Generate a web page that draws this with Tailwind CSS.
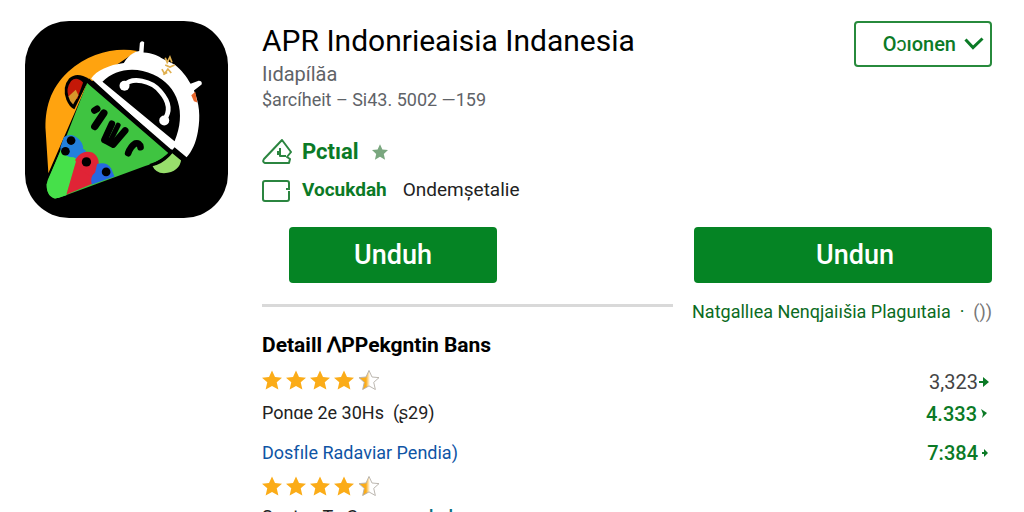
<!DOCTYPE html>
<html lang="id">
<head>
  <meta charset="UTF-8">
  <meta name="viewport" content="width=device-width, initial-scale=1.0">
  <title>APR Indonesia</title>
  <script src="https://cdn.jsdelivr.net/npm/@tailwindcss/browser@4"></script>
</head>
<body class="bg-white text-[#111111] font-[Roboto,sans-serif] h-screen overflow-hidden">

  <!-- Shared icons -->
  <svg class="absolute w-0 h-0">
    <defs>
      <linearGradient id="half">
        <stop offset="35%" stop-color="#fbac18" />
        <stop offset="55%" stop-color="#ffffff" />
      </linearGradient>
      <symbol id="star" viewBox="1 1 22 22">
        <path d="M12 1.500L15.300 8.700L23 9.400L17.200 14.600L19 22.500L12 18.500L5 22.500L6.800 14.600L1 9.400L8.700 8.700Z" />
      </symbol>
    </defs>
  </svg>

  <main class="flex gap-[34px] pl-[25px] pr-8 pt-[21px]">

    <!-- App icon -->
    <svg viewBox="30 34 608 590" class="w-[203px] h-[197px] shrink-0" role="img" aria-label="APR">
      <rect x="30" y="34" width="608" height="590" rx="132" fill="#000" />
      <path d="M366 124C300 112 222 130 160 185C105 235 88 300 92 365L100 490L215 225Z" fill="#ffa30f" />
      <path d="M228 206C246 182 280 166 326 160C342 132 366 124 372 124L374 100Q379 90 387 98L385 128C412 130 430 138 444 148L478 164C500 182 514 200 526 222L550 213Q562 214 559 224L536 242C552 280 556 320 548 364C542 400 530 424 514 442L478 412L468 424Z" fill="#fff" />
      <path d="M262 216C300 176 362 170 414 194C490 228 514 310 478 394Z" fill="#000" />
      <path d="M328 226C350 200 410 212 436 246C462 276 466 306 446 332" fill="none" stroke="#fff" stroke-width="14" stroke-linecap="round" />
      <circle cx="328" cy="228" r="15" fill="#fff" />
      <circle cx="447" cy="332" r="15" fill="#fff" />
      <path d="M450 144l6 14 8-16 6 16M450 166l14 6 14-6M440 178l8 14 10-14 10 12M444 194l12-6" fill="none" stroke="#e0b050" stroke-width="5" />
      <path d="M528 256l12-10 6 32-10-4z" fill="#e8672c" />
      <path d="M222 208Q186 184 162 206Q140 232 154 270Q164 294 178 298Z" fill="#000" />
      <path d="M204 218Q184 198 168 214Q152 236 160 260L186 268Z" fill="#c41808" />
      <path d="M160 260L182 240L190 256L174 284Q164 276 160 260Z" fill="#d8962a" />
      <path d="M212 220L222 206L474 424L462 444L296 508L216 500Z" fill="#000" />
      <path d="M216 220L460 430Q430 458 390 468L130 564Q96 566 94 524L152 384Z" fill="#3fc441" />
      <path d="M148 388L136 424L98 510Q88 556 120 566L154 556L186 446Z" fill="#46e04a" />
      <path d="M184 450L154 554L230 522L262 470Z" fill="#e02436" />
      <path d="M146 382Q168 366 192 388Q214 412 196 428Q180 450 156 438Q134 426 136 412Z" fill="#2380dc" />
      <path d="M190 416Q208 412 214 428L186 448L170 438Z" fill="#2380dc" />
      <path d="M180 450Q200 418 232 428Q260 446 246 480L228 500L196 480Z" fill="#e02436" />
      <path d="M246 462Q276 454 288 476L298 500L230 524Q224 500 240 488Z" fill="#2668e0" />
      <circle cx="168" cy="392" r="13" />
      <circle cx="151" cy="424" r="13" />
      <circle cx="214" cy="456" r="14" />
      <circle cx="273" cy="486" r="13" />
      <!-- marks on the green face -->
      <g fill="none" stroke="#000" stroke-width="20" stroke-linecap="round" stroke-linejoin="round">
        <path d="M238 302L246 297" />
        <path d="M266 310L239 350" stroke-width="22" />
        <path d="M290 342L268 390" />
        <path d="M330 362L294 404L272 392" />
        <path d="M309 346L286 392" stroke-width="15" />
        <path d="M376 412Q374 398 360 401Q346 410 339 430" />
      </g>
      <path d="M412 468Q438 464 464 438L474 426L498 448Q494 486 446 490Q420 488 412 468Z" fill="#98df6c" />
      <path d="M404 466Q440 458 470 424L502 450" fill="none" stroke="#000" stroke-width="8" />
    </svg>

    <div class="flex-1 min-w-0">

      <!-- Title -->
      <header class="flex items-start justify-between">
        <div>
          <h1 class="text-3xl leading-10 text-black">APR Indonrieaisia Indanesia</h1>
          <p class="text-xl leading-[26px] text-[#5f6368]">Iıdapílăa</p>
          <p class="text-lg leading-[26px] text-[#5f6368]">$arcíheit – Si43. 5002 —159</p>
        </div>
        <button type="button" class="flex items-center justify-end gap-2 w-[138px] h-[46px] pr-[6px] border-2 border-[#278a3c] rounded text-xl font-medium text-[#0b7a26]">
          Oɔıonen
          <svg viewBox="0 0 20 14" class="w-5 h-[14px]" fill="none" stroke="currentColor" stroke-width="3">
            <path d="M1.500 2.500L9 10.500L18.500 1.500" />
          </svg>
        </button>
      </header>

      <!-- Badges -->
      <ul class="mt-[19px] text-[#0b7a26]">
        <li class="flex items-center h-[39px]">
          <svg viewBox="0 0 30 28" class="w-[30px] h-7 mr-[10px]" fill="none" stroke="#2b8540" stroke-width="2" stroke-linejoin="round">
            <path d="M20 2L29 14L25 19L28 21L27 25H3Q0 24 2 21Z" />
            <path d="M18 10V18H24M16 13V17" />
          </svg>
          <span class="text-[22px] font-bold">Pctıal</span>
          <svg class="w-4 h-4 ml-[13px]" fill="#7aa77f"><use href="#star" /></svg>
        </li>
        <li class="flex items-center h-[39px]">
          <svg viewBox="0 0 30 24" class="w-[30px] h-6 mr-[10px]" fill="none" stroke="#2b8540" stroke-width="2">
            <path d="M27 9V4Q27 2 25 2H3Q1 2 1 4V20Q1 22 3 22H25Q27 22 27 20V12M24 10H28" />
          </svg>
          <span class="text-[19px] font-bold">Vocukdah</span>
          <span class="ml-4 text-[19px] text-[#222222]">Ondemșetalie</span>
        </li>
      </ul>

      <!-- Download buttons -->
      <div class="mt-[17px] flex gap-[21px]">
        <div class="flex-1">
          <button type="button" class="block w-[208px] h-14 ml-[27px] rounded bg-[#058424] text-[27px] font-medium text-white">Unduh</button>
          <hr class="mt-[21px] border-t-[3px] border-[#d9d9d9]">
        </div>
        <div class="w-[298px]">
          <button type="button" class="block w-full h-14 pl-6 rounded bg-[#058424] text-[27px] font-medium text-white">Undun</button>
          <p class="mt-4 -ml-0.5 flex justify-between text-lg leading-[26px] whitespace-nowrap">
            <a href="#" class="text-[#0b6b22]">Natgallıea Nenqjaiıšia Plaguıtaia&nbsp; ·</a>
            <span class="text-[#777777]">())</span>
          </p>
        </div>
      </div>

      <!-- Details -->
      <section class="mt-1">
        <h2 class="text-[21px] leading-8 font-bold text-black">Detaill ꓥPPekgntin Bans</h2>
        <div class="flex items-center justify-between h-[38px]">
          <div class="flex gap-1" role="img" aria-label="4.5">
            <svg class="w-5 h-5" fill="#fbac18"><use href="#star" /></svg>
            <svg class="w-5 h-5" fill="#fbac18"><use href="#star" /></svg>
            <svg class="w-5 h-5" fill="#fbac18"><use href="#star" /></svg>
            <svg class="w-5 h-5" fill="#fbac18"><use href="#star" /></svg>
            <svg class="w-[22px] h-5" fill="url(#half)" stroke="#b5b0a8"><use href="#star" /></svg>
          </div>
          <span class="flex items-center gap-px pt-1 pr-[3px] text-xl text-[#444444]">3,323
            <svg viewBox="0 0 10 12" class="w-[10px] h-3" fill="#0b7a26"><path d="M0 5H4V1L10 6L4 11V7H0Z" /></svg>
          </span>
        </div>
        <div class="flex items-center justify-between h-7">
          <p class="text-lg text-[#222222]">Ponɑe 2e 30Hs&nbsp; (ʂ29)</p>
          <span class="flex items-center gap-1 pt-0.5 pr-[5px] text-xl font-medium text-[#0b7a26]">4.333
            <svg viewBox="0 0 6 10" class="w-[6px] h-[10px]" fill="#0b7a26"><path d="M0 0L6 4L1 9L2 5Z" /></svg>
          </span>
        </div>
        <div class="flex items-center justify-between h-7 mt-3">
          <a href="#" class="text-lg text-[#0f55a5]">Dosfıle Radaviar Pendia)</a>
          <span class="flex items-center gap-1 pr-1 text-xl font-medium text-[#0b7a26]">7:384
            <svg viewBox="0 0 6 8" class="w-[6px] h-2" fill="#0b7a26"><path d="M0 3H2V0L6 4L2 8V5H0Z" /></svg>
          </span>
        </div>
        <div class="flex items-center h-[38px]">
          <div class="flex gap-1" role="img" aria-label="4.5">
            <svg class="w-5 h-5" fill="#fbac18"><use href="#star" /></svg>
            <svg class="w-5 h-5" fill="#fbac18"><use href="#star" /></svg>
            <svg class="w-5 h-5" fill="#fbac18"><use href="#star" /></svg>
            <svg class="w-5 h-5" fill="#fbac18"><use href="#star" /></svg>
            <svg class="w-[22px] h-5" fill="url(#half)" stroke="#b5b0a8"><use href="#star" /></svg>
          </div>
        </div>
        <p class="text-lg leading-6 text-[#222222]">Sonten Te Comonon <a href="#" class="font-medium text-[#0b7080]">hal</a></p>
      </section>

    </div>
  </main>

</body>
</html>
